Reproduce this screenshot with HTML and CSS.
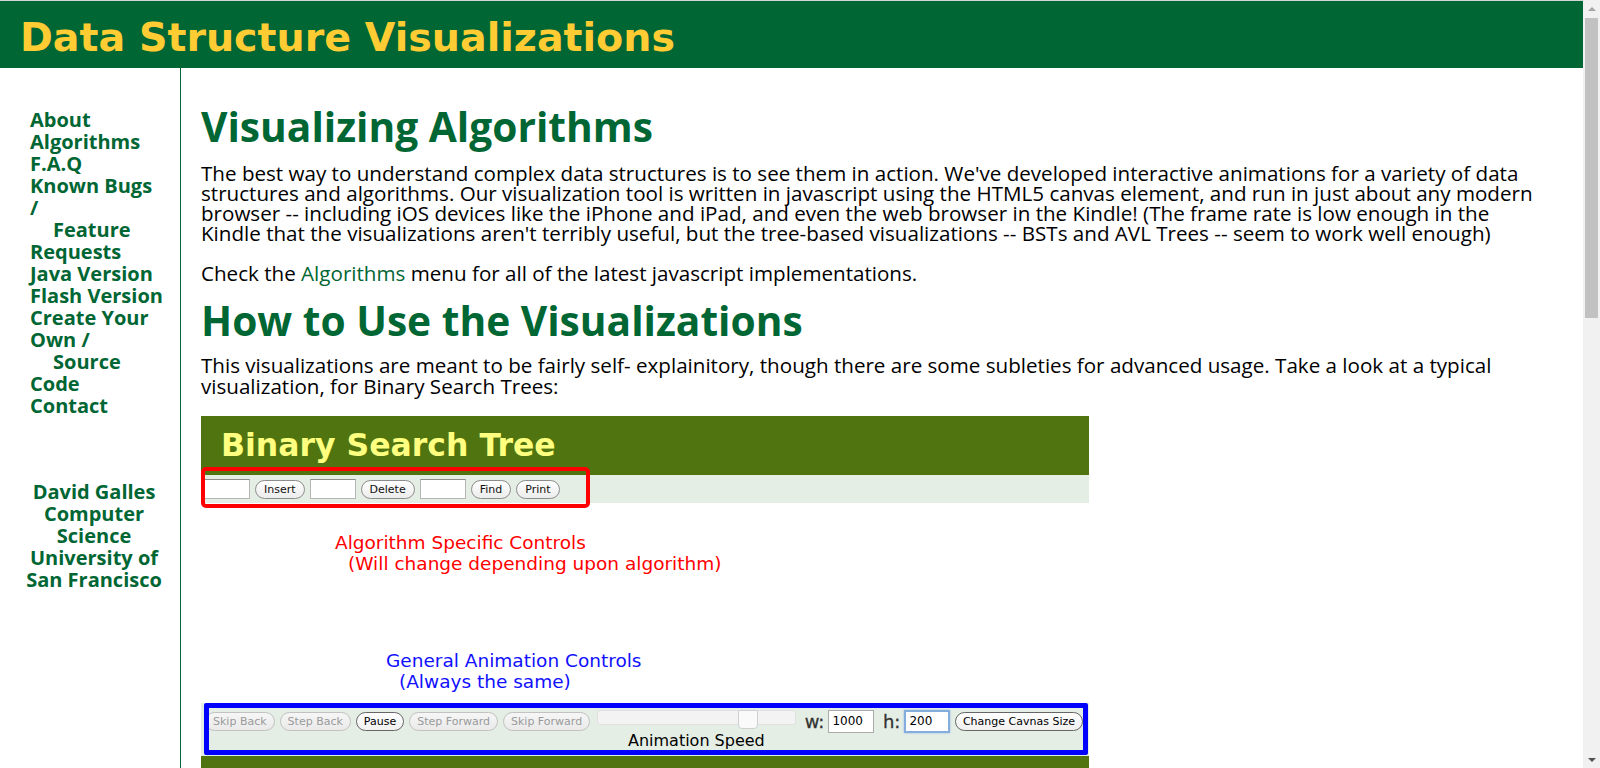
FILE: index.html
```html
<!DOCTYPE html>
<html lang="en">
<head>
<meta charset="utf-8">
<title>Data Structure Visualizations</title>
<link rel="stylesheet" href="styles.css">
</head>
<body>
<div class="screen">
  <div class="site">
    <header class="header">
      <h1 class="site-title">Data Structure Visualizations</h1>
    </header>
    <div class="columns">
      <nav class="sidebar">
        <ul class="menu">
          <li><a href="#">About</a></li>
          <li><a href="#">Algorithms</a></li>
          <li><a href="#">F.A.Q</a></li>
          <li><a href="#">Known Bugs<br>/<br><span class="indent">Feature</span><br>Requests</a></li>
          <li><a href="#">Java Version</a></li>
          <li><a href="#">Flash Version</a></li>
          <li><a href="#">Create Your<br>Own /<br><span class="indent">Source</span><br>Code</a></li>
          <li><a href="#">Contact</a></li>
        </ul>
        <div class="author">David Galles<br>Computer<br>Science<br>University of<br>San Francisco</div>
      </nav>
      <main class="content">
        <h2 class="heading">Visualizing Algorithms</h2>
        <p class="text text-first">The best way to understand complex data structures is to see them in action. We've developed interactive animations for a variety of data structures and algorithms. Our visualization tool is written in javascript using the HTML5 canvas element, and run in just about any modern browser -- including iOS devices like the iPhone and iPad, and even the web browser in the Kindle! (The frame rate is low enough in the Kindle that the visualizations aren't terribly useful, but the tree-based visualizations -- BSTs and AVL Trees -- seem to work well enough)</p>
        <p class="text text-gap">Check the <a class="inline-link" href="#">Algorithms</a> menu for all of the latest javascript implementations.</p>
        <h2 class="heading heading-second">How to Use the Visualizations</h2>
        <p class="text text-loose">This visualizations are meant to be fairly self- explainitory, though there are some subleties for advanced usage. Take a look at a typical visualization, for Binary Search Trees:</p>

        <div class="demo">
          <div class="demo-title">Binary Search Tree</div>
          <div class="algo-bar">
            <span class="field"></span>
            <span class="pill pill-top">Insert</span>
            <span class="field"></span>
            <span class="pill pill-top">Delete</span>
            <span class="field"></span>
            <span class="pill pill-top">Find</span>
            <span class="pill pill-top">Print</span>
          </div>
          <div class="canvas">
            <div class="note note-red">
              <div>Algorithm Specific Controls</div>
              <div class="note-sub">(Will change depending upon algorithm)</div>
            </div>
            <div class="note note-blue">
              <div>General Animation Controls</div>
              <div class="note-sub">(Always the same)</div>
            </div>
          </div>
          <div class="anim-panel">
            <div class="anim-box">
              <span class="pill pill-off first">Skip Back</span>
              <span class="pill pill-off">Step Back</span>
              <span class="pill pill-on">Pause</span>
              <span class="pill pill-off">Step Forward</span>
              <span class="pill pill-off">Skip Forward</span>
              <div class="speed">
                <div class="track"><span class="thumb"></span></div>
                <div class="speed-label">Animation Speed</div>
              </div>
              <span class="dim-label">w:</span>
              <span class="box-input">1000</span>
              <span class="dim-label">h:</span>
              <span class="box-input focused">200</span>
              <span class="pill pill-on">Change Cavnas Size</span>
            </div>
          </div>
          <div class="demo-foot"></div>
          <div class="red-frame"></div>
        </div>
      </main>
    </div>
  </div>
  <div class="scrollbar">
    <div class="sb-arrow"><span class="tri-up"></span></div>
    <div class="sb-thumb"></div>
    <div class="sb-rest"></div>
    <div class="sb-arrow"><span class="tri-down"></span></div>
  </div>
</div>
</body>
</html>
```
FILE: styles.css
```css
html, body {
  margin: 0;
  padding: 0;
}
body {
  background: #fff;
  overflow: hidden;
  font-family: "Open Sans", "Noto Sans", sans-serif;
  color: #000;
}
.screen {
  display: flex;
  width: 1600px;
  height: 768px;
  overflow: hidden;
}
.site {
  flex: 1;
  min-width: 0;
  display: flex;
  flex-direction: column;
  border-top: 1px solid #d4d4d4;
}
.header {
  background: #006633;
  height: 67px;
  flex: none;
}
.site-title {
  margin: 0;
  padding: 5px 0 0 20px;
  font: bold 39.6px/62px "DejaVu Sans", sans-serif;
  color: #ffcc33;
  white-space: nowrap;
}
.columns {
  flex: 1;
  display: flex;
  min-height: 0;
}
.sidebar {
  width: 181px;
  box-sizing: border-box;
  flex: none;
  border-right: 1px solid #006633;
  padding-top: 41px;
  font: bold 20px/22px "Open Sans", sans-serif;
  color: #006633;
}
.menu {
  list-style: none;
  margin: 0;
  padding: 0 0 0 30px;
  white-space: nowrap;
}
.menu a {
  color: #006633;
  text-decoration: none;
}
.indent {
  padding-left: 23px;
}
.author {
  margin-top: 64px;
  padding-left: 8px;
  text-align: center;
  white-space: nowrap;
}
.content {
  flex: 1;
  min-width: 0;
  padding: 0 35px 0 20px;
}
.heading {
  margin: 34px 0 0;
  font: bold 40.7px/48px "Open Sans", sans-serif;
  color: #006633;
}
.heading-second {
  margin-top: 13.5px;
}
.text {
  margin: 0;
  font-size: 20.6px;
  line-height: 20px;
}
.text-first {
  margin-top: 12.8px;
}
.text-gap {
  margin-top: 20px;
}
.text-loose {
  line-height: 21.4px;
  margin-top: 10.4px;
}
.inline-link {
  color: #006633;
  text-decoration: none;
}

/* demo screenshot */
.demo {
  position: relative;
  width: 888px;
  margin-top: 18.9px;
  font-family: "DejaVu Sans", sans-serif;
}
.demo-title {
  background: #50740f;
  height: 58px;
  padding: 1px 0 0 20px;
  font: bold 31.5px/57px "DejaVu Sans", sans-serif;
  color: #ffff80;
}
.algo-bar {
  background: #e5eee5;
  height: 28px;
  display: flex;
  align-items: center;
  gap: 5px;
  padding-left: 3px;
}
.field {
  width: 44px;
  height: 18px;
  background: #fff;
  border: 1px solid #b5b5b5;
  border-top-color: #8d8d8d;
}
.pill {
  display: inline-flex;
  align-items: center;
  justify-content: center;
  height: 17px;
  padding: 0 7px;
  border: 1px solid #8c8c8c;
  border-radius: 10px;
  background: linear-gradient(#ffffff, #ececec);
  font-size: 11px;
  color: #111;
  white-space: nowrap;
  flex: none;
}
.pill-top {
  padding: 0 8px;
}
.pill-off {
  border-color: #c2c2c2;
  color: #9a9a9a;
  background: linear-gradient(#f6f6f6, #eaeaea);
}
.pill-on {
  border-color: #666;
  color: #000;
  background: linear-gradient(#ffffff, #f0f0f0);
}
.canvas {
  background: #fff;
  height: 200px;
  padding-top: 28.5px;
  box-sizing: border-box;
}
.note {
  font: 18.5px/21px "DejaVu Sans", sans-serif;
}
.note-sub {
  padding-left: 13px;
}
.note-red {
  color: #ff0000;
  margin-left: 134px;
}
.note-blue {
  color: #1010ff;
  margin-left: 185px;
  margin-top: 76px;
}
.anim-panel {
  background: #e5eee5;
  height: 53px;
  padding: 0 1px 0 3px;
}
.anim-box {
  height: 52px;
  box-sizing: border-box;
  border: 5px solid #0000ff;
  border-radius: 2px;
  display: flex;
  align-items: flex-start;
  gap: 5px;
  padding-top: 3px;
  overflow: hidden;
}
.anim-box .pill {
  margin-top: 1px;
}
.anim-box .first {
  margin-left: -4px;
}
.speed {
  width: 201px;
  margin-left: 2px;
  display: flex;
  flex-direction: column;
  align-items: center;
}
.track {
  position: relative;
  width: 100%;
  height: 15px;
  box-sizing: border-box;
  margin-top: -1px;
  background: #f3f3f3;
  border: 1px solid #e0e0e0;
  border-radius: 3px;
}
.thumb {
  position: absolute;
  left: 140px;
  top: -1px;
  width: 20px;
  height: 19px;
  box-sizing: border-box;
  background: #fafafa;
  border: 1px solid #d0d0d0;
  border-radius: 0 0 4px 4px;
}
.speed-label {
  font-size: 16px;
  line-height: 18px;
  margin-top: 7px;
  color: #000;
}
.dim-label {
  font: 18px/22px "DejaVu Sans", sans-serif;
  color: #333;
  margin-left: 4px;
  -webkit-text-stroke: 0.3px #333;
}
.box-input {
  width: 46px;
  height: 23px;
  box-sizing: border-box;
  background: #fff;
  border: 1px solid #aaa;
  font-size: 12px;
  line-height: 21px;
  padding-left: 3px;
  margin-left: -1px;
  margin-top: -1px;
}
.focused {
  border: 2px solid #84acdc;
  box-shadow: 0 0 2px #9bbce6;
  line-height: 19px;
}
.demo-foot {
  background: #50740f;
  height: 30px;
}
.red-frame {
  position: absolute;
  left: 0;
  top: 51px;
  width: 389px;
  height: 41px;
  box-sizing: border-box;
  border: 4px solid #ff0000;
  border-radius: 5px;
}

/* scrollbar */
.scrollbar {
  width: 17px;
  flex: none;
  background: #f1f1f1;
  display: flex;
  flex-direction: column;
  align-items: center;
}
.sb-arrow {
  width: 17px;
  height: 17px;
  display: flex;
  align-items: center;
  justify-content: center;
}
.tri-up {
  width: 0;
  height: 0;
  border-left: 4px solid transparent;
  border-right: 4px solid transparent;
  border-bottom: 4px solid #a3a3a3;
}
.tri-down {
  width: 0;
  height: 0;
  border-left: 4px solid transparent;
  border-right: 4px solid transparent;
  border-top: 4px solid #505050;
}
.sb-thumb {
  width: 13px;
  height: 300px;
  margin-top: 1px;
  background: #c1c1c1;
}
.sb-rest {
  flex: 1;
}
```
